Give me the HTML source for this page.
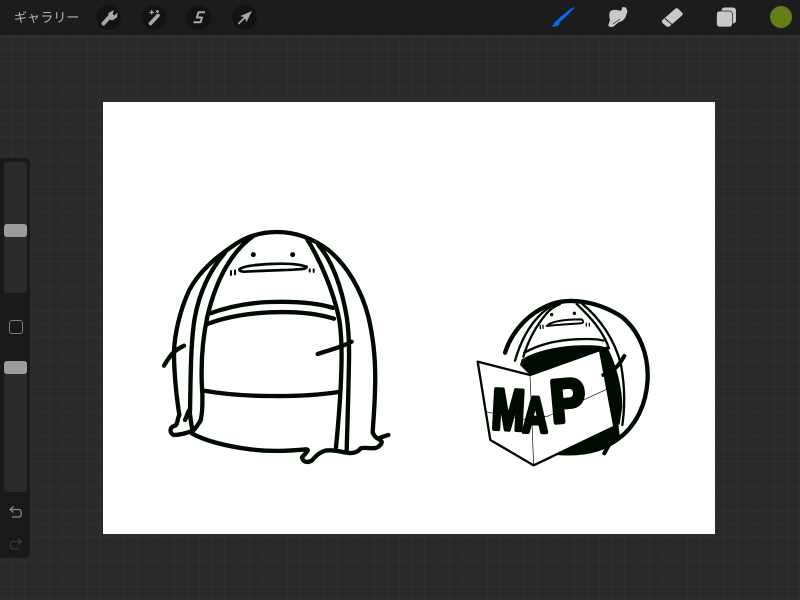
<!DOCTYPE html>
<html><head><meta charset="utf-8"><style>
html,body{margin:0;padding:0;width:800px;height:600px;overflow:hidden;background:#2a2a2a}
body{position:relative;font-family:"Liberation Sans","Noto Sans CJK JP",sans-serif}
#bg{position:absolute;left:0;top:0}
#bar{position:absolute;left:0;top:0;width:800px;height:35px;background:#1c1c1c}
#t{position:absolute;left:14px;top:9px;font-size:13px;line-height:17px;color:#b4b4b4;letter-spacing:.1px;white-space:nowrap}
#cv{position:absolute;left:103px;top:102px;width:612px;height:432px;background:#fff}
#side{position:absolute;left:0;top:158px;width:30px;height:400px;background:#191919;border-radius:0 5px 5px 0}
.tr{position:absolute;left:4px;width:23px;background:#2a2a2a;border-radius:3px}
.th{position:absolute;left:4px;width:23px;height:12.5px;background:#9c9c9c;border-radius:3px}
#sq{position:absolute;left:8.5px;width:12px;height:12px;border:1.2px solid #7c7c7c;border-radius:3px}
svg{position:absolute;left:0;top:0}
</style></head><body>
<svg id="bg" width="800" height="600"><defs><pattern id="g" width="12.5" height="12.5" patternUnits="userSpaceOnUse" y="-0.5"><path d="M12.5 0V12.5M0 12.5H12.5" stroke="#323232" stroke-width="1.4" fill="none"/></pattern></defs><rect width="800" height="600" fill="#2a2a2a"/><rect width="800" height="600" fill="url(#g)"/></svg>
<div id="bar"></div>
<div id="t">ギャラリー</div>
<div id="cv"></div>
<div id="side">
<div class="tr" style="top:4px;height:131px"></div>
<div class="th" style="top:66px"></div>
<div id="sq" style="top:162px"></div>
<div class="tr" style="top:203px;height:131px"></div>
<div class="th" style="top:203px"></div>
</div>
<svg width="800" height="600" viewBox="0 0 800 600">
<g fill="#131313"><circle cx="108.500" cy="17.500" r="12.500"/><circle cx="154" cy="17.500" r="12.500"/><circle cx="199" cy="17.500" r="12.500"/><circle cx="244.500" cy="17.500" r="12.500"/></g>
<!-- wrench -->
<path d="M103.500 23.500L110 16.500" stroke="#a8a8a8" stroke-width="4" stroke-linecap="round" fill="none"/>
<path d="M108 18L108.500 13L114 10L112.500 14L114.500 15.500L117.500 12.500L117 17.500L112 20.500Z" fill="#a8a8a8"/>
<!-- wand -->
<path d="M150.500 23.500L158 15.500" stroke="#a8a8a8" stroke-width="3.600" stroke-linecap="round"/>
<path d="M149.500 12.500H154M151.700 10V14.500M157.500 10V13M156 11.500H159" stroke="#a8a8a8" stroke-width="1.300"/>
<!-- S -->
<path d="M205 12.300H198.500L196.800 17.500H202L200.500 22.300H193.500" stroke="#a8a8a8" stroke-width="2" fill="none" stroke-linejoin="round"/>
<!-- arrow -->
<path d="M252 11L246.500 22L245 18.500L239 24.500L237.800 23.300L243.800 17.300L240.500 16Z" fill="#a8a8a8"/>
<!-- brush -->
<path d="M574 7.500C570 12 564 18 559 22L557.500 20.500C563 15 568 11 574 7.500Z" fill="#0b6bf0" stroke="#0b6bf0" stroke-width="1"/>
<path d="M555.500 21C558 20.500 560 22 559.500 24C558.500 26 555 27 551.500 26.500C553.500 25 554 23 555.500 21Z" fill="#0b6bf0"/>
<!-- smudge -->
<path d="M610.500 11C614 9 618 10 621 11L622.500 7L626 7.500L627.500 11L626 16C624.500 19.500 622 21.500 619 22L613.500 26.500C611 27.500 608 27 608.500 24.500L610 20C609 16 609 13 610.500 11Z" fill="#c8c8c8"/>
<path d="M613 24L620 19" stroke="#1c1c1c" stroke-width=".6"/>
<!-- eraser -->
<path d="M662.500 20L675 9C676 8 677.500 8 678.500 9L682 12.500C683 13.500 683 14.500 682 15.500L670 26C669 27 667.500 27 666.500 26.500L662.500 23C661.500 22 661.500 21 662.500 20Z" fill="#c8c8c8"/>
<path d="M665 18.500L672 24.500" stroke="#1c1c1c" stroke-width=".9"/>
<!-- layers -->
<rect x="721.500" y="7.500" width="14.500" height="16" rx="3" fill="#c8c8c8"/>
<rect x="716.500" y="11" width="16" height="16" rx="3" fill="#c8c8c8" stroke="#1c1c1c" stroke-width=".7"/>
<circle cx="781" cy="17" r="11" fill="#637f16"/>
<!-- undo/redo -->
<path d="M11.500 509.500H19C22 509.500 22 517 19 517H12" stroke="#8a8a8a" stroke-width="1.300" fill="none"/>
<path d="M13.500 506.500L10 509.500L13.500 512.500" stroke="#8a8a8a" stroke-width="1.300" fill="none"/>
<path d="M20 541.500H13C9.500 541.500 9.500 549 13 549H19" stroke="#3a3a3a" stroke-width="1.300" fill="none"/>
<path d="M18 538.500L21.500 541.500L18 544.500" stroke="#3a3a3a" stroke-width="1.300" fill="none"/>

<!-- left figure -->
<g transform="translate(150,220) scale(.33333)" fill="none" stroke="#000a00" stroke-width="13" stroke-linecap="round" stroke-linejoin="round">
<path d="M88 585C78 520 72 450 72 395C74 340 90 270 118 210C150 150 200 110 260 70C300 45 340 36 380 36C430 36 485 52 535 90C590 135 635 210 655 290C672 360 678 430 675 510C674 560 670 600 668 638"/>
<path d="M310 48C250 90 200 170 172 290C155 370 152 450 157 520C158 560 156 590 150 605"/>
<path d="M225 98C180 150 150 210 135 290C122 360 122 470 120 575"/>
<path d="M470 55C510 120 550 210 568 300C574 340 576 390 574 450C572 530 564 620 558 682"/>
<path d="M505 75C545 120 575 200 590 290C596 330 598 370 597 420C596 500 592 620 590 690"/>
<path d="M175 282C240 258 300 248 360 246C430 244 500 248 550 264"/>
<path d="M172 312C230 290 300 280 360 277C430 274 500 280 552 296"/>
<path d="M160 512C230 524 300 528 360 528C430 529 500 526 565 516"/>
<path d="M42 437C52 420 62 405 72 396C82 387 92 382 102 377"/>
<path d="M503 402C535 390 570 385 605 365"/>
<path d="M88 585C80 600 85 615 72 618C58 622 58 640 72 645C90 645 105 640 130 632C140 620 148 610 153 598M105 600C110 590 112 580 118 570C122 590 122 610 128 632"/>
<path d="M125 640C170 665 240 680 300 688C350 694 410 694 470 688C480 690 465 700 456 712C458 725 470 730 485 722C495 712 505 698 525 692C550 688 570 695 590 698C610 702 625 695 632 685C650 680 672 690 685 680C695 672 700 665 688 658C680 655 700 650 715 645M668 636C672 650 680 655 688 658"/>
<circle cx="310" cy="104" r="5" fill="#000a00" stroke-width="5"/>
<circle cx="428" cy="104" r="5" fill="#000a00" stroke-width="5"/>
<path d="M268 148C280 138 310 135 360 132C400 130 440 130 470 140C470 148 455 147 430 149C380 151 320 153 285 155C275 155 268 153 268 148Z" stroke-width="8"/>
<path d="M243 153V165M255 151V163M479 148V155M491 148V156" stroke-width="6"/>
</g>

<!-- map figure -->
<g transform="translate(465,290) scale(.33333)" stroke-linecap="round" stroke-linejoin="round">
<path d="M120 188C140 125 190 68 260 42C320 22 400 35 470 80C525 125 550 195 548 265C545 340 515 405 462 445C410 485 340 495 270 488" fill="none" stroke="#000a00" stroke-width="13"/>
<path d="M465 445C420 480 340 500 265 490L300 470L460 400Z" fill="#000a00"/>
<path d="M150 212C165 160 190 110 225 75C238 62 250 52 270 42" fill="none" stroke="#000a00" stroke-width="7"/>
<path d="M175 200C190 150 215 105 245 70C255 58 265 50 285 42" fill="none" stroke="#000a00" stroke-width="7"/>
<path d="M350 40C405 85 450 150 468 225C480 290 480 350 472 405" fill="none" stroke="#000a00" stroke-width="7"/>
<path d="M335 42C380 85 415 125 432 175" fill="none" stroke="#000a00" stroke-width="7"/>
<path d="M178 188C220 165 265 152 330 148C370 146 400 147 415 152" fill="none" stroke="#000a00" stroke-width="7"/>
<path d="M170 208C220 178 290 168 340 166C380 165 410 166 420 172L300 300L190 250L165 225Z" fill="#000a00"/>
<path d="M38 215L195 255L405 180L448 410L206 526L76 450Z" fill="#fff" stroke="#000a00" stroke-width="7"/>
<path d="M195 255L206 526M62 365L175 388L250 378L425 298" fill="none" stroke="#000a00" stroke-width="2"/>
<path d="M408 175L425 172C450 220 470 290 470 350L462 402L450 405Z" fill="#000a00" stroke="#000a00" stroke-width="4"/>
<path d="M415 255C440 250 460 230 478 198M440 450L418 490" fill="none" stroke="#000a00" stroke-width="12"/>
<circle cx="260" cy="74" r="5" fill="#000a00"/><circle cx="328" cy="70" r="5" fill="#000a00"/>
<path d="M245 108C260 92 310 88 350 88C358 95 355 100 345 100C310 102 280 104 245 108Z" fill="none" stroke="#000a00" stroke-width="6"/>
<path d="M226 106V116M234 106V115M364 100V108M373 100V108" stroke="#000a00" stroke-width="4"/>
<g font-family="'Liberation Sans',sans-serif" font-weight="700" fill="#000a00" stroke="#000a00" stroke-width="10">
<text transform="translate(78,415) rotate(3) scale(.98,1.42)" font-size="120">M</text>
<text transform="translate(172,425) rotate(1) scale(.95,1.35)" font-size="110">A</text>
<text transform="translate(262,398) rotate(-5) scale(1.3,1.5)" font-size="120">P</text>
</g>
</g>
</svg>
</body></html>
